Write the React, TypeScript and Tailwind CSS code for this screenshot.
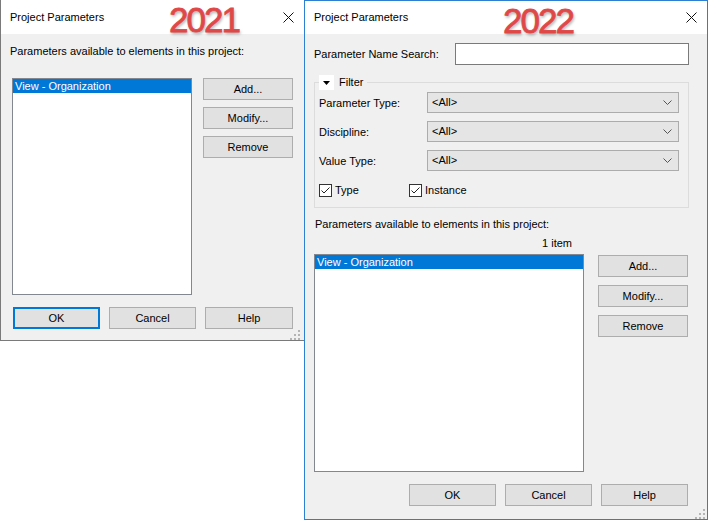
import React from "react";

const FONT = "font-['Liberation_Sans',Arial,sans-serif]";

function CloseX() {
  return (
    <svg width="11" height="11" viewBox="0 0 11 11" className="block">
      <path d="M0.5 0.5 L10.5 10.5 M10.5 0.5 L0.5 10.5" stroke="#111" strokeWidth="1" fill="none" />
    </svg>
  );
}

function Grip() {
  const dots = [
    [8, 0],
    [4, 4],
    [8, 4],
    [0, 8],
    [4, 8],
    [8, 8],
  ];
  return (
    <svg width="10" height="10" viewBox="0 0 10 10" className="block">
      {dots.map(([x, y], i) => (
        <rect key={i} x={x} y={y} width="2" height="2" fill="#b4b4b4" />
      ))}
    </svg>
  );
}

function Btn({ label, className = "", primary = false }: { label: string; className?: string; primary?: boolean }) {
  return (
    <div
      className={
        "h-[22px] flex items-center justify-center bg-[#e1e1e1] text-[11px] text-black " +
        (primary ? "border-2 border-[#0078d7] " : "border border-[#adadad] ") +
        className
      }
    >
      {label}
    </div>
  );
}

function Chevron() {
  return (
    <svg width="9" height="5" viewBox="0 0 9 5" className="block">
      <path d="M0.5 0.5 L4.5 4.5 L8.5 0.5" stroke="#555" strokeWidth="1" fill="none" />
    </svg>
  );
}

function Select({ label }: { label: string }) {
  return (
    <div className="flex items-center h-[21px]">
      <div className="w-[108px] text-[11px] pt-[1px]">{label}</div>
      <div className="w-[252px] h-[21px] bg-[#e5e5e5] border border-[#acacac] flex items-center justify-between pl-[4px] pr-[6px] text-[11px]">
        <span>&lt;All&gt;</span>
        <Chevron />
      </div>
    </div>
  );
}

function Check({ label, className = "" }: { label: string; className?: string }) {
  return (
    <div className={"flex items-center h-[13px] " + className}>
      <div className="w-[13px] h-[13px] border border-[#333] bg-white flex items-center justify-center">
        <svg width="11" height="11" viewBox="0 0 11 11" className="block">
          <path d="M1.5 5.5 L4 8 L9.5 2.5" stroke="#222" strokeWidth="1" fill="none" />
        </svg>
      </div>
      <span className="ml-[3px] text-[11px]">{label}</span>
    </div>
  );
}

function ListBox({ className = "" }: { className?: string }) {
  return (
    <div className={"bg-white border border-[#828790] " + className}>
      <div className="h-[14px] bg-[#0078d7] text-white text-[11px] leading-[14px] pl-[2px]">View - Organization</div>
    </div>
  );
}

function Year({ text, className }: { text: string; className: string }) {
  return (
    <div
      className={
        "absolute top-[2px] text-[35px] leading-[36px] font-normal tracking-[-2px] text-[#e04848] [-webkit-text-stroke:0.8px_#e04848] [text-shadow:1px_2px_3px_rgba(0,0,0,0.35)] " +
        className
      }
    >
      {text}
    </div>
  );
}

export default function App() {
  return (
    <div className={"w-[708px] h-[520px] bg-white flex items-start text-black " + FONT}>
      {/* 2021 dialog */}
      <div className="relative w-[304px] h-[341px] bg-[#f0f0f0] border-l border-b border-[#7a7a7a] flex flex-col">
        <div className="h-[34px] bg-white flex items-center justify-between pl-[9px] pr-[10px] text-[11px]">
          <span>Project Parameters</span>
          <CloseX />
        </div>
        <div className="mt-[10px] pl-[9px] text-[11px] leading-[15px]">Parameters available to elements in this project:</div>
        <div className="flex mt-[19px] pl-[11px]">
          <ListBox className="w-[180px] h-[217px]" />
          <div className="ml-[11px] flex flex-col gap-[7px]">
            <Btn label="Add..." className="w-[90px]" />
            <Btn label="Modify..." className="w-[90px]" />
            <Btn label="Remove" className="w-[90px]" />
          </div>
        </div>
        <div className="flex mt-[12px] pl-[12px] gap-[9px]">
          <Btn label="OK" primary className="w-[87px]" />
          <Btn label="Cancel" className="w-[87px]" />
          <Btn label="Help" className="w-[88px]" />
        </div>
        <div className="flex justify-end pr-[4px] mt-[1px]">
          <Grip />
        </div>
        <Year text="2021" className="left-[168px]" />
      </div>

      {/* 2022 dialog */}
      <div className="relative w-[404px] h-[520px] bg-[#f0f0f0] border border-[#2d7fd1] flex flex-col">
        <div className="h-[33px] bg-white flex items-center justify-between pl-[9px] pr-[10px] text-[11px]">
          <span>Project Parameters</span>
          <CloseX />
        </div>
        <div className="flex items-center mt-[9px] pl-[9px]">
          <div className="w-[141px] text-[11px]">Parameter Name Search:</div>
          <div className="w-[234px] h-[22px] bg-white border border-[#7a7a7a]" />
        </div>
        <fieldset className="ml-[9px] w-[375px] mt-[10px] border border-[#dcdcdc] pl-[4px] pr-[9px] pb-[10px] pt-[2px]">
          <legend className="flex items-center h-[15px] pr-[4px]">
            <span className="w-[15px] h-[15px] bg-white flex items-center justify-center">
              <svg width="7" height="4" viewBox="0 0 7 4" className="block">
                <path d="M0 0 L7 0 L3.5 4 Z" fill="#000" />
              </svg>
            </span>
            <span className="ml-[5px] text-[11px]">Filter</span>
          </legend>
          <div className="flex flex-col gap-[8px]">
            <Select label="Parameter Type:" />
            <Select label="Discipline:" />
            <Select label="Value Type:" />
          </div>
          <div className="flex mt-[13px]">
            <Check label="Type" className="w-[90px]" />
            <Check label="Instance" />
          </div>
        </fieldset>
        <div className="mt-[9px] pl-[10px] text-[11px] leading-[15px]">Parameters available to elements in this project:</div>
        <div className="mt-[4px] ml-[9px] w-[270px] pr-[12px] text-right text-[11px] leading-[15px]">1 item</div>
        <div className="flex mt-[3px] pl-[9px]">
          <ListBox className="w-[270px] h-[218px]" />
          <div className="ml-[14px] mt-[1px] flex flex-col gap-[8px]">
            <Btn label="Add..." className="w-[90px]" />
            <Btn label="Modify..." className="w-[90px]" />
            <Btn label="Remove" className="w-[90px]" />
          </div>
        </div>
        <div className="flex justify-end mt-[12px] pr-[19px] gap-[9px]">
          <Btn label="OK" className="w-[87px]" />
          <Btn label="Cancel" className="w-[87px]" />
          <Btn label="Help" className="w-[87px]" />
        </div>
        <div className="flex justify-end pr-[2px] mt-[3px]">
          <Grip />
        </div>
        <Year text="2022" className="left-[198px]" />
      </div>
    </div>
  );
}
